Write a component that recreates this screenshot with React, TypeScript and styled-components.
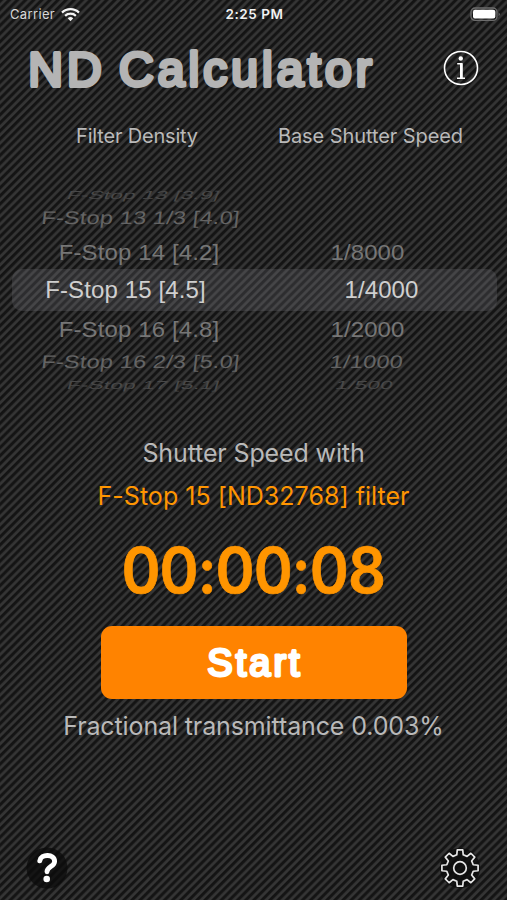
import React from "react";
import styled, { createGlobalStyle } from "styled-components";

const Global = createGlobalStyle`
  * { box-sizing: border-box; }
  body { margin: 0; background: #1b1b1b; }
`;

const Screen = styled.main`
  width: 507px;
  height: 900px;
  overflow: hidden;
  display: flex;
  flex-direction: column;
  font-family: Inter, "Liberation Sans", sans-serif;
  color: #b9b9b9;
  background: repeating-linear-gradient(135deg, #131313 0, #151515 1.7px, #333333 3px, #363636 4.4px, #151515 5.74px);
`;

const StatusBar = styled.header`
  height: 28px;
  display: grid;
  grid-template-columns: 1fr auto 1fr;
  align-items: center;
  padding: 0 6px 0 10px;
  font-size: 13px;
  color: #d8d8d8;
`;
const Carrier = styled.div`
  display: flex;
  align-items: center;
  gap: 6px;
  letter-spacing: 0.35px;
`;
const Clock = styled.div`
  font-size: 13.5px;
  font-weight: 600;
  color: #f2f2f2;
  letter-spacing: 0.55px;
  transform: translateX(-1px);
`;
const BatterySlot = styled.div`
  display: flex;
  justify-content: flex-end;
`;

const TitleRow = styled.div`
  height: 84px;
  display: flex;
  justify-content: space-between;
  align-items: center;
  padding: 0 28px 4px 27px;
`;
const Lettering = styled.svg<{ $size: number; $weight: number; $color: string }>`
  display: block;
  overflow: visible;
  font-family: "Liberation Sans", Arial, sans-serif;
  font-size: ${(p) => p.$size}px;
  word-spacing: -4px;
  fill: ${(p) => p.$color};
  stroke: ${(p) => p.$color};
  stroke-width: ${(p) => p.$weight}px;
  stroke-linejoin: round;
  stroke-linecap: round;
`;
const IconButton = styled.button`
  border: 0;
  padding: 0;
  background: none;
  display: block;
  line-height: 0;
`;

const Headings = styled.div`
  height: 48px;
  display: flex;
  justify-content: space-between;
  padding: 12px 44px 0 76px;
  font-size: 20px;
  line-height: 24px;
`;
const Heading = styled.span<{ $spacing: number }>`
  letter-spacing: ${(p) => p.$spacing}px;
  white-space: nowrap;
`;

const Picker = styled.section`
  height: 240px;
  padding: 28px 10px 0 12px;
  font-family: "Liberation Sans", Arial, sans-serif;
  font-size: 24px;
  letter-spacing: 0.12px;
`;
const PickerRow = styled.div<{ $h: number; $selected?: boolean }>`
  height: ${(p) => p.$h}px;
  display: grid;
  grid-template-columns: 254px 1fr;
  align-items: center;
  border-radius: 10px;
  background: ${(p) => (p.$selected ? "rgba(118,118,128,0.25)" : "none")};
`;
const Value = styled.span<{ $color: string; $sx: number; $sy: number; $skew: number; $dx: number }>`
  justify-self: center;
  white-space: nowrap;
  line-height: 24px;
  height: 24px;
  margin: -12px 0;
  color: ${(p) => p.$color};
  transform: translateX(${(p) => p.$dx}px) scale(${(p) => p.$sx}, ${(p) => p.$sy}) skewX(${(p) => p.$skew}deg);
`;

const Result = styled.section`
  display: flex;
  flex-direction: column;
  align-items: center;
  padding-top: 36px;
`;
const Line = styled.div<{ $h: number; $size: number; $spacing: number; $accent?: boolean }>`
  height: ${(p) => p.$h}px;
  line-height: ${(p) => p.$h}px;
  font-size: ${(p) => p.$size}px;
  letter-spacing: ${(p) => p.$spacing}px;
  white-space: nowrap;
  color: ${(p) => (p.$accent ? "#ff9500" : "#b9b9b9")};
`;
const Time = styled.div`
  height: 92px;
  line-height: 97px;
  font-size: 63px;
  font-weight: 600;
  letter-spacing: -1px;
  color: #ff9500;
  -webkit-text-stroke: 0.7px #ff9500;
  white-space: nowrap;
  transform: scaleX(0.94);
`;
const StartButton = styled.button`
  width: 306px;
  height: 73px;
  margin: 12px 0 9px;
  border: 0;
  border-radius: 11px;
  background: #ff8300;
  display: flex;
  align-items: center;
  justify-content: center;
`;

const Footer = styled.footer`
  margin-top: auto;
  display: flex;
  justify-content: space-between;
  padding: 0 26px 11px 26px;
`;

const rows = [
  { h: 14, l: "F-Stop 13 [3.9]", r: "", c: "#484848", sx: 0.95, sy: 0.48, k: -12, dl: 4, dr: -14 },
  { h: 32, l: "F-Stop 13 1/3 [4.0]", r: "", c: "#646464", sx: 0.985, sy: 0.76, k: -5, dl: 2, dr: -14 },
  { h: 35, l: "F-Stop 14 [4.2]", r: "1/8000", c: "#767676", sx: 1, sy: 0.95, k: 0, dl: 0, dr: -14 },
  { h: 42, l: "F-Stop 15 [4.5]", r: "1/4000", c: "#cfcfcf", sx: 1, sy: 1, k: 0, dl: -13.5, dr: 0, selected: true },
  { h: 35, l: "F-Stop 16 [4.8]", r: "1/2000", c: "#767676", sx: 1, sy: 0.95, k: 0, dl: 0, dr: -14 },
  { h: 32, l: "F-Stop 16 2/3 [5.0]", r: "1/1000", c: "#646464", sx: 0.985, sy: 0.76, k: -5, dl: 2, dr: -14.5 },
  { h: 14, l: "F-Stop 17 [5.1]", r: "1/500", c: "#484848", sx: 0.95, sy: 0.48, k: -8, dl: 4, dr: -17 },
];

const gear = (() => {
  const pts: string[] = [];
  for (let i = 0; i < 8; i++) {
    const base = (i * Math.PI) / 4;
    [[-0.24, 13.6], [-0.15, 18.3], [0.15, 18.3], [0.24, 13.6]].forEach(([d, r]) => {
      pts.push(`${(20 + Math.sin(base + d) * r).toFixed(2)},${(20 - Math.cos(base + d) * r).toFixed(2)}`);
    });
  }
  return `M${pts.join("L")}Z`;
})();

const Wifi = () => (
  <svg width="19" height="15" viewBox="0 0 19 15" fill="none" stroke="#f4f4f4" strokeWidth="2.3">
    <path d="M1 5.6a12.2 12.2 0 0 1 17 0M4.1 8.8a7.8 7.8 0 0 1 10.8 0" />
    <path d="M9.5 14.2 6.7 11.3a4 4 0 0 1 5.6 0Z" fill="#f4f4f4" stroke="none" />
  </svg>
);
const Battery = () => (
  <svg width="31" height="15" viewBox="0 0 31 15">
    <rect x="1" y="1" width="26" height="12.4" rx="4" fill="none" stroke="#6c6c6c" strokeWidth="1.3" />
    <rect x="3" y="2.8" width="22.3" height="8.8" rx="2" fill="#fff" />
    <path d="M28.5 5.2q2.6 2 0 4z" fill="#6c6c6c" />
  </svg>
);

export default function App() {
  return (
    <Screen>
      <Global />
      <StatusBar>
        <Carrier>Carrier <Wifi /></Carrier>
        <Clock>2:25 PM</Clock>
        <BatterySlot><Battery /></BatterySlot>
      </StatusBar>
      <TitleRow>
        <Lettering width="348" height="50" $size={48} $weight={3.9} $color="#b4b4b4">
          <text x="1.2" y="42.6" textLength="343.5" lengthAdjust="spacing">ND Calculator</text>
        </Lettering>
        <IconButton aria-label="Info">
          <svg width="36" height="36" viewBox="0 0 36 36" fill="none" stroke="#fff">
            <circle cx="18" cy="18" r="16.5" strokeWidth="1.6" />
            <circle cx="17.8" cy="8.5" r="2.2" fill="#fff" stroke="none" />
            <path d="M14.2 13.8h4.6v14M14 28.3h8" strokeWidth="1.4" />
            <path d="M18.3 13.5v15" strokeWidth="2.6" />
          </svg>
        </IconButton>
      </TitleRow>
      <Headings>
        <Heading $spacing={-0.18}>Filter Density</Heading>
        <Heading $spacing={-0.08}>Base Shutter Speed</Heading>
      </Headings>
      <Picker>
        {rows.map((row) => (
          <PickerRow key={row.l} $h={row.h} $selected={row.selected}>
            <Value $color={row.c} $sx={row.sx} $sy={row.sy} $skew={row.k} $dx={row.dl}>{row.l}</Value>
            <Value $color={row.c} $sx={row.sx} $sy={row.sy} $skew={row.k} $dx={row.dr}>{row.r}</Value>
          </PickerRow>
        ))}
      </Picker>
      <Result>
        <Line $h={34} $size={25} $spacing={-0.13}>Shutter Speed with</Line>
        <Line $h={52} $size={25} $spacing={0.03} $accent>F-Stop 15 [ND32768] filter</Line>
        <Time>00:00:08</Time>
        <StartButton>
          <Lettering width="96" height="42" $size={38} $weight={2.9} $color="#fff">
            <text x="1.3" y="34" textLength="92.3" lengthAdjust="spacing">Start</text>
          </Lettering>
        </StartButton>
        <Line $h={36} $size={25} $spacing={-0.12}>Fractional transmittance 0.003%</Line>
      </Result>
      <Footer>
        <IconButton aria-label="Help">
          <svg width="42" height="42" viewBox="0 0 42 42" fill="none">
            <circle cx="21" cy="21" r="20.5" fill="#0b0b0b" fillOpacity=".75" />
            <path d="M13.8 13.8c1.2-7.4 14.8-7 14.8.6 0 5-7.6 5.4-7.6 10.4" stroke="#fff" strokeWidth="4.9" strokeLinecap="round" />
            <circle cx="20.7" cy="32" r="3.3" fill="#fff" />
          </svg>
        </IconButton>
        <IconButton aria-label="Settings">
          <svg width="42" height="42" viewBox="-1 -1 42 42" fill="none" stroke="#e6e6e6" strokeWidth="1.7" strokeLinejoin="round">
            <circle cx="20" cy="20" r="20" fill="#0b0b0b" fillOpacity=".8" stroke="none" />
            <path d={gear} />
            <circle cx="20" cy="20" r="6.3" />
          </svg>
        </IconButton>
      </Footer>
    </Screen>
  );
}
